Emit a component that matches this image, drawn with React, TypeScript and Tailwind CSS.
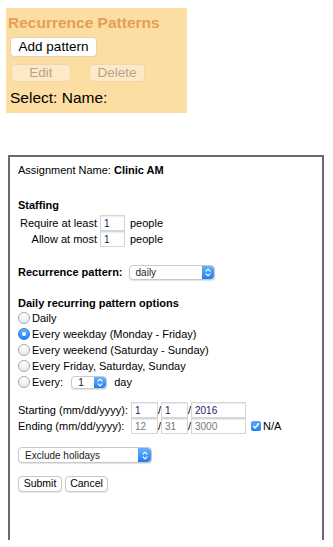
import React from "react";

const Radio = ({ checked = false }: { checked?: boolean }) => (
  <span
    className={
      checked
        ? "w-[12px] h-[12px] rounded-full border border-[#2f7fdc] bg-gradient-to-b from-[#6ab3fb] to-[#1c7ef3] flex items-center justify-center shrink-0"
        : "w-[12px] h-[12px] rounded-full border border-[#a8a8a8] bg-gradient-to-b from-white to-[#ececec] shrink-0"
    }
  >
    {checked && <span className="w-[4px] h-[4px] rounded-full bg-white" />}
  </span>
);

const Stepper = ({ w }: { w: string }) => (
  <span className={`${w} h-full rounded-r-[4px] bg-gradient-to-b from-[#68b0fb] to-[#1b7ef5] flex items-center justify-center`}>
    <svg width="6" height="9" viewBox="0 0 6 9" fill="none" stroke="white" strokeWidth="1.2" strokeLinecap="round" strokeLinejoin="round">
      <path d="M1 3.2 L3 1.2 L5 3.2" />
      <path d="M1 5.8 L3 7.8 L5 5.8" />
    </svg>
  </span>
);

const SelectBox = ({ label, cls, stepW }: { label: string; cls: string; stepW: string }) => (
  <span
    className={`${cls} flex items-stretch rounded-[4px] border border-[#c9c9c9] bg-white shadow-[0_1px_1px_rgba(0,0,0,0.12)]`}
  >
    <span className="flex-1 flex items-center pl-[6px] text-[10px] text-[#222] whitespace-nowrap">{label}</span>
    <Stepper w={stepW} />
  </span>
);

const Field = ({ value, cls, dim = false }: { value: string; cls: string; dim?: boolean }) => (
  <span
    className={`${cls} h-full shrink-0 border border-[#d6d6d6] shadow-[inset_0_1px_1px_rgba(0,0,0,0.08)] bg-white flex items-center pl-[3px] text-[10px] ${
      dim ? "text-[#777]" : "text-[#1b1b5e]"
    }`}
  >
    {value}
  </span>
);

const App = () => {
  return (
    <div
      className="w-[333px] h-[547px] bg-white overflow-hidden"
      style={{ fontFamily: '"Liberation Sans", Arial, sans-serif' }}
    >
      {/* recurrence patterns panel */}
      <div className="ml-[6px] mt-[8px] w-[181px] h-[105px] bg-[#fddea2] pt-[6px] flex flex-col">
        <div className="ml-[2px] h-[18px] leading-[18px] text-[15.5px] font-bold text-[#e39e57] whitespace-nowrap">
          Recurrence Patterns
        </div>
        <div className="mt-[5px] ml-[4px] w-[87px] h-[20px] rounded-[4px] bg-white border border-[#e4d3b2] flex items-center justify-center text-[13.5px] text-black">
          Add pattern
        </div>
        <div className="mt-[7px] ml-[5px] flex gap-[18px]">
          <div className="w-[60px] h-[18px] rounded-[4px] bg-[#fde9c6] border border-[#efd6ab] flex items-center justify-center text-[13.5px] text-[#b5a58c]">
            Edit
          </div>
          <div className="w-[56px] h-[18px] rounded-[4px] bg-[#fde9c6] border border-[#efd6ab] flex items-center justify-center text-[13.5px] text-[#b5a58c]">
            Delete
          </div>
        </div>
        <div className="mt-[7px] ml-[4px] h-[18px] leading-[18px] text-[15.5px] text-black whitespace-nowrap">
          Select: Name:
        </div>
      </div>

      {/* assignment form */}
      <div className="mt-[42px] ml-[8px] w-[316px] h-[385px] border-t-2 border-x-2 border-[#6a6a6a] pl-[8px] text-[11px] text-black flex flex-col">
        <div className="mt-[7px] h-[13px] leading-[13px] whitespace-nowrap">
          Assignment Name: <span className="font-bold">Clinic AM</span>
        </div>

        <div className="mt-[22px] h-[13px] leading-[13px] font-bold">Staffing</div>
        <div className="mt-[3px] h-[16px] flex items-center whitespace-nowrap">
          <span className="w-[79px] shrink-0 text-right">Require at least</span>
          <Field value="1" cls="ml-[3px] w-[25px]" />
          <span className="ml-[5px]">people</span>
        </div>
        <div className="h-[16px] flex items-center whitespace-nowrap">
          <span className="w-[79px] shrink-0 text-right">Allow at most</span>
          <Field value="1" cls="ml-[3px] w-[25px]" />
          <span className="ml-[5px]">people</span>
        </div>

        <div className="mt-[17px] h-[16px] flex items-center whitespace-nowrap">
          <span className="font-bold">Recurrence pattern:</span>
          <SelectBox label="daily" cls="ml-[6px] w-[86px] h-[15px]" stepW="w-[12px]" />
        </div>

        <div className="mt-[17px] h-[13px] leading-[13px] font-bold whitespace-nowrap">Daily recurring pattern options</div>
        <div className="flex flex-col whitespace-nowrap">
          <div className="h-[16px] flex items-center gap-[2px]">
            <Radio />
            <span>Daily</span>
          </div>
          <div className="h-[16px] flex items-center gap-[2px]">
            <Radio checked />
            <span>Every weekday (Monday - Friday)</span>
          </div>
          <div className="h-[16px] flex items-center gap-[2px]">
            <Radio />
            <span>Every weekend (Saturday - Sunday)</span>
          </div>
          <div className="h-[16px] flex items-center gap-[2px]">
            <Radio />
            <span>Every Friday, Saturday, Sunday</span>
          </div>
          <div className="h-[16px] flex items-center gap-[2px]">
            <Radio />
            <span>Every:</span>
            <SelectBox label="1" cls="ml-[6px] w-[36px] h-[13px]" stepW="w-[12px]" />
            <span className="ml-[5px]">day</span>
          </div>
        </div>

        <div className="mt-[12px] h-[16px] flex items-center whitespace-nowrap">
          <span className="w-[113px] shrink-0">Starting (mm/dd/yyyy):</span>
          <Field value="1" cls="w-[27px]" />
          <span className="w-[3px] text-center">/</span>
          <Field value="1" cls="w-[27px]" />
          <span className="w-[3px] text-center">/</span>
          <Field value="2016" cls="w-[55px]" />
        </div>
        <div className="h-[16px] flex items-center whitespace-nowrap">
          <span className="w-[113px] shrink-0">Ending (mm/dd/yyyy):</span>
          <Field value="12" cls="w-[27px]" dim />
          <span className="w-[3px] text-center">/</span>
          <Field value="31" cls="w-[27px]" dim />
          <span className="w-[3px] text-center">/</span>
          <Field value="3000" cls="w-[55px]" dim />
          <span className="ml-[5px] w-[10px] h-[10px] rounded-[2px] bg-gradient-to-b from-[#5aa9fb] to-[#1b7ef5] flex items-center justify-center">
            <svg width="8" height="8" viewBox="0 0 8 8" fill="none" stroke="white" strokeWidth="1.4" strokeLinecap="round" strokeLinejoin="round">
              <path d="M1.5 4.2 L3.2 6 L6.5 1.8" />
            </svg>
          </span>
          <span className="ml-[2px]">N/A</span>
        </div>

        <div className="mt-[13px]">
          <SelectBox label="Exclude holidays" cls="w-[134px] h-[16px]" stepW="w-[13px]" />
        </div>

        <div className="mt-[13px] flex gap-[3px]">
          <span className="w-[44px] h-[16px] rounded-[4px] border border-[#c9c9c9] bg-white shadow-[0_1px_1px_rgba(0,0,0,0.1)] flex items-center justify-center text-[10.5px]">
            Submit
          </span>
          <span className="w-[43px] h-[16px] rounded-[4px] border border-[#c9c9c9] bg-white shadow-[0_1px_1px_rgba(0,0,0,0.1)] flex items-center justify-center text-[10.5px]">
            Cancel
          </span>
        </div>
      </div>
    </div>
  );
};

export default App;
